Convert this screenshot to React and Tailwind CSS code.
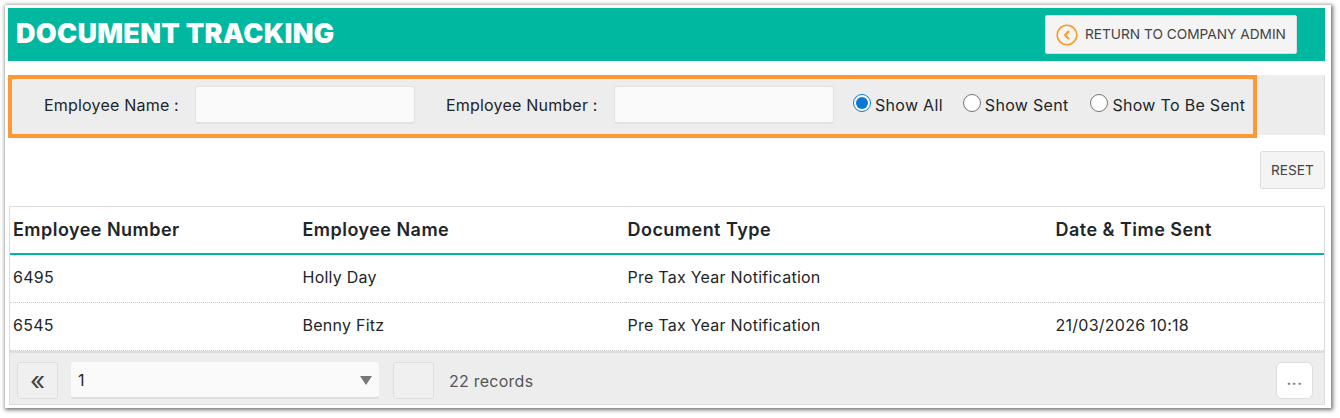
import React from 'react';

const rows = [
  { number: '6495', name: 'Holly Day', type: 'Pre Tax Year Notification', sent: '' },
  { number: '6545', name: 'Benny Fitz', type: 'Pre Tax Year Notification', sent: '21/03/2026 10:18' },
];

const Radio = ({ checked, label, className }) => (
  <label className={`flex items-center whitespace-nowrap ${className}`}>
    <span className={`mb-[3px] flex h-[18px] w-[18px] items-center justify-center rounded-full border bg-white ${checked ? 'border-[#0b76d8]' : 'border-[#767676]'}`}>
      {checked && <span className="h-[12px] w-[12px] rounded-full bg-[#0b76d8]" />}
    </span>
    <span className="ml-[4px]">{label}</span>
  </label>
);

const App = () => {
  return (
    <div className="h-[418px] w-[1340px] overflow-hidden bg-white pl-[5px] pt-[5px] font-['Inter',sans-serif] text-[#212529]">
      <div className="h-[403px] w-[1326px] bg-white pl-[3px] pr-[6px] pt-[3px] shadow-[1px_1px_4px_1px_rgba(0,0,0,0.55)]">
        {/* Title bar */}
        <div className="flex h-[53px] items-center justify-between bg-[#00b89f] pl-[8px] pr-[28px]">
          <h1 className="text-[27px] font-black tracking-[0.28px] text-white">DOCUMENT TRACKING</h1>
          <button className="flex h-[39px] w-[252px] items-center rounded-[2px] border border-[#ddd] bg-[#f4f4f4] pl-[10px] text-[13.7px] text-[#444]">
            <svg width="22" height="22" viewBox="0 0 22 22" fill="none" stroke="#ff9a1f" strokeWidth="1.6" strokeLinecap="round" strokeLinejoin="round">
              <circle cx="11" cy="11" r="9.8" />
              <path d="M12.5 7.5 9 11l3.5 3.5" strokeWidth="2" />
            </svg>
            <span className="ml-[7px]">RETURN TO COMPANY ADMIN</span>
          </button>
        </div>

        {/* Filters */}
        <div className="mt-[14px] flex h-[60px] border-r border-[#ddd] bg-[#ededed]">
          <div className="flex h-[63px] w-[1249px] shrink-0 items-center whitespace-nowrap border-[4px] border-[#ff9933] bg-[#ededed] pl-[32px] text-[16px] tracking-[0.3px]">
            <span className="mb-[4px] w-[135px] tracking-[0.2px]">Employee Name :</span>
            <div className="mb-[3px] ml-[16px] h-[38px] w-[220px] rounded-[3px] border border-b-2 border-[#e2e2e2] bg-[#fafafa]" />
            <span className="mb-[4px] ml-[31px] w-[152px] tracking-[0.2px]">Employee Number :</span>
            <div className="mb-[3px] ml-[16px] h-[38px] w-[220px] rounded-[3px] border border-b-2 border-[#e2e2e2] bg-[#fafafa]" />
            <Radio checked label="Show All" className="mb-[4px] ml-[19px]" />
            <Radio label="Show Sent" className="mb-[4px] ml-[20px]" />
            <Radio label="Show To Be Sent" className="mb-[4px] ml-[22px]" />
          </div>
        </div>

        <div className="mt-[16px] flex justify-end">
          <button className="h-[38px] w-[65px] rounded-[2px] border border-[#ddd] bg-[#f4f4f4] text-[13.7px] text-[#444]">RESET</button>
        </div>

        {/* Table */}
        <div className="ml-px mt-[17px] border border-b-0 border-[#ddd]">
          <table className="w-full table-fixed border-collapse text-left text-[16px] tracking-[0.25px]">
            <colgroup>
              <col className="w-[289.5px]" />
              <col className="w-[325px]" />
              <col className="w-[428px]" />
              <col />
            </colgroup>
            <thead>
              <tr className="h-[47px] border-b-2 border-[#00b89f] text-[18px] tracking-[0.47px]">
                <th className="pb-[2px] pl-[3px] font-semibold">Employee Number</th>
                <th className="pb-[2px] pl-[3px] font-semibold">Employee Name</th>
                <th className="pb-[2px] pl-[3px] font-semibold">Document Type</th>
                <th className="pb-[2px] pl-[3px] font-semibold">Date &amp; Time Sent</th>
              </tr>
            </thead>
            <tbody>
              {rows.map((row) => (
                <tr key={row.number} className="h-[48px] border-b border-dotted border-[#ccc]">
                  <td className="pb-[2px] pl-[3px]">{row.number}</td>
                  <td className="pb-[2px] pl-[3px]">{row.name}</td>
                  <td className="pb-[2px] pl-[3px]">{row.type}</td>
                  <td className="pb-[2px] pl-[3px]">{row.sent}</td>
                </tr>
              ))}
            </tbody>
          </table>
        </div>

        {/* Pager */}
        <div className="ml-px flex h-[54px] items-center border-x border-b border-t-2 border-[#ddd] bg-[#ededed] pl-[7px] pr-[11px] pt-[5px]">
          <button className="flex h-[37px] w-[41px] items-center justify-center rounded-[3px] border border-[#ddd] bg-[#f0f0f0] text-[26px] leading-none text-[#444]">«</button>
          <div className="relative ml-[13px] h-[37px] w-[308px] rounded-[3px] border-b-2 border-[#ddd] bg-[#fafafa] pl-[7px] pt-[6px] text-[16px]">
            1
            <span className="absolute right-[7px] top-[14px] h-0 w-0 border-x-[6px] border-t-[9px] border-x-transparent border-t-[#777]" />
          </div>
          <div className="ml-[14px] h-[37px] w-[41px] rounded-[3px] border border-[#ddd] bg-[#f0f0f0]" />
          <span className="ml-[15px] text-[16px] tracking-[0.25px] text-[#555]">22 records</span>
          <button className="ml-auto h-[37px] w-[37px] rounded-[6px] border border-[#ddd] bg-white text-[15px] font-semibold tracking-[0.5px] text-[#777]">...</button>
        </div>
      </div>
    </div>
  );
};

export default App;
